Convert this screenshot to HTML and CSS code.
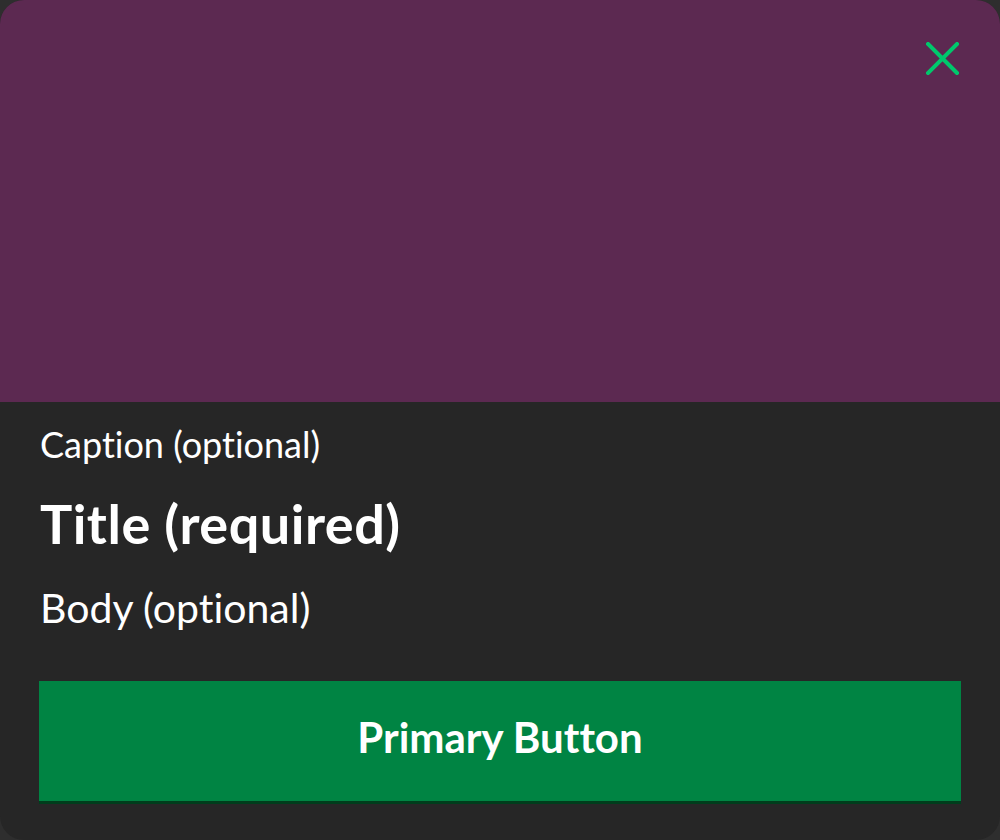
FILE: index.html
```html
<!DOCTYPE html>
<html lang="en">
<head>
<meta charset="utf-8">
<title>Dialog</title>
<link rel="stylesheet" href="styles.css">
</head>
<body>
<div class="card">
  <div class="hero">
    <button class="close" aria-label="Close">
      <svg width="33" height="33" viewBox="0 0 33 33"><path d="M2 2 L31 31 M31 2 L2 31" stroke="#00c86c" stroke-width="4" stroke-linecap="square"/></svg>
    </button>
  </div>
  <div class="content">
    <p class="caption">Caption (optional)</p>
    <h1 class="title">Title (required)</h1>
    <p class="body-text">Body (optional)</p>
    <button class="primary">Primary Button</button>
  </div>
</div>
</body>
</html>
```
FILE: styles.css
```css
html, body {
  margin: 0;
  padding: 0;
  background: #2e2e2e;
}
body {
  width: 1000px;
  height: 840px;
  font-family: "Lato", "Noto Sans", sans-serif;
  font-variant-ligatures: none;
}
.card {
  width: 1000px;
  height: 840px;
  border-radius: 24px;
  overflow: hidden;
  background: #262626;
  display: flex;
  flex-direction: column;
}
.hero {
  height: 402px;
  flex-shrink: 0;
  background: #5c2951;
  display: flex;
  justify-content: flex-end;
  align-items: flex-start;
}
.close {
  margin: 42px 41px 0 0;
  padding: 0;
  border: 0;
  background: none;
  width: 33px;
  height: 33px;
  display: flex;
}
.content {
  padding: 0 39px;
  display: flex;
  flex-direction: column;
  color: #ffffff;
}
.caption {
  margin: 20px 0 0 1px;
  font-size: 36px;
  line-height: 44px;
  font-weight: 400;
}
.title {
  margin: 28px 0 0 1px;
  font-size: 54px;
  line-height: 60px;
  font-weight: 700;
  letter-spacing: 0.5px;
}
.body-text {
  margin: 29px 0 0 1px;
  font-size: 41px;
  line-height: 50px;
  font-weight: 400;
}
.primary {
  margin-top: 48px;
  height: 123px;
  flex-shrink: 0;
  border: 0;
  border-bottom: 3px solid #003d1c;
  background: #008443;
  color: #ffffff;
  font-family: inherit;
  font-variant-ligatures: none;
  font-size: 42px;
  font-weight: 700;
  padding: 0 0 8px;
}
```
